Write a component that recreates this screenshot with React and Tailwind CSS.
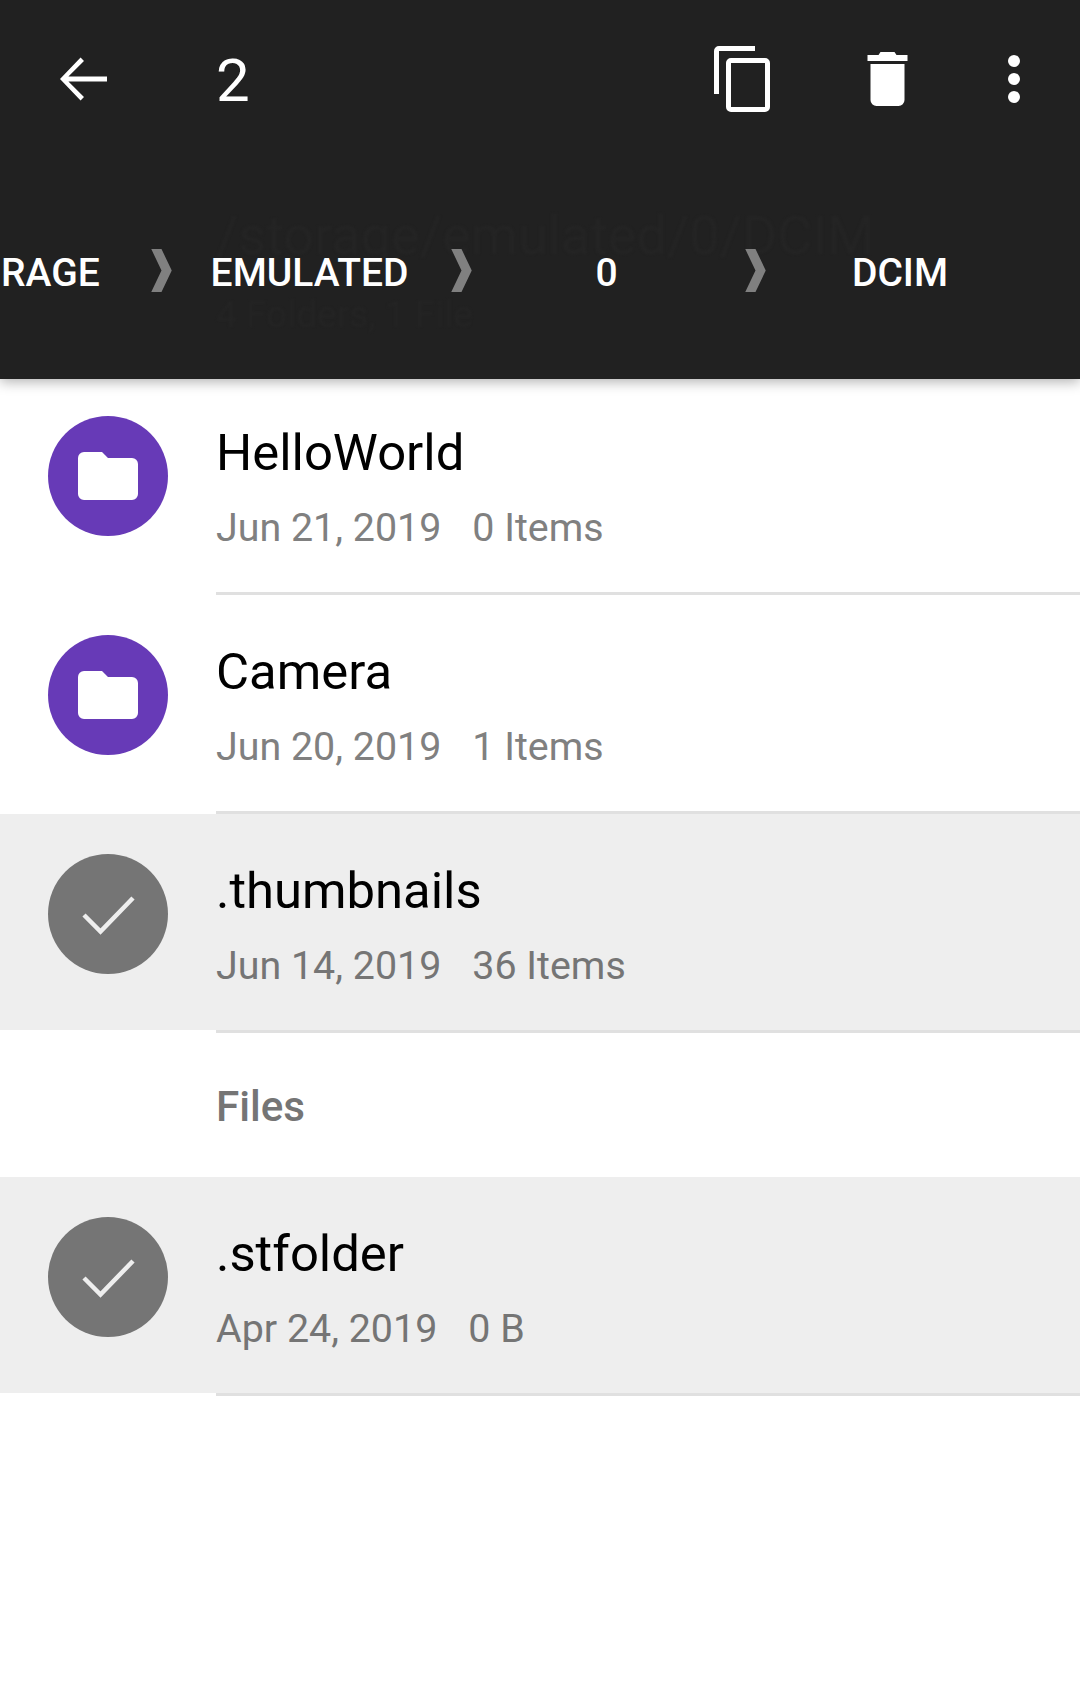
const FolderIcon = () => (
  <svg viewBox="0 0 60 48" className="w-[60px] h-[48px]" fill="white">
    <path d="M6 0h18l6 6h24a6 6 0 0 1 6 6v30a6 6 0 0 1-6 6H6a6 6 0 0 1-6-6V6a6 6 0 0 1 6-6z" />
  </svg>
);

const CheckIcon = () => (
  <svg viewBox="0 0 120 120" className="w-[120px] h-[120px]" fill="none" stroke="#eeeeee" strokeWidth="4.5">
    <path d="M36 61l16.500 16.500L85 44" />
  </svg>
);

const rows = [
  { name: "HelloWorld", date: "Jun 21, 2019", info: "0 Items" },
  { name: "Camera", date: "Jun 20, 2019", info: "1 Items" },
  { name: ".thumbnails", date: "Jun 14, 2019", info: "36 Items", selected: true },
];

const Row = ({ name, date, info, selected, first }) => (
  <div className={first ? "-mt-[3px]" : ""}>
    <div className={`h-[216px] flex pl-[48px] ${selected ? "bg-[#eeeeee]" : "bg-white"}`}>
      <div className={`w-[120px] h-[120px] mt-[40px] rounded-full flex items-center justify-center ${selected ? "bg-[#757575]" : "bg-[#673ab7]"}`}>
        {selected ? <CheckIcon /> : <FolderIcon />}
      </div>
      <div className="ml-[48px]">
        <div className="mt-[44px] text-[50.8px] leading-[66px] text-black">{name}</div>
        <div className={`mt-[15px] text-[39.4px] leading-[54px] flex gap-[31px] ${selected ? "text-[#757575]" : "text-[#808080]"}`}>
          <span>{date}</span>
          <span>{info}</span>
        </div>
      </div>
    </div>
    <div className="h-[3px] ml-[216px] bg-[#e0e0e0]" />
  </div>
);

const Chevron = () => (
  <svg viewBox="0 0 20 42" className="w-[21px] h-[43px] shrink-0" fill="#808080">
    <path d="M0 0h10l10 21-10 21H0l10-21z" />
  </svg>
);

export default function App() {
  return (
    <div className="w-[1080px] h-[1699px] bg-white overflow-hidden" style={{ fontFamily: "Roboto, sans-serif" }}>
      <header className="relative z-10 h-[379px] bg-[#212121] shadow-[0_3px_12px_rgba(0,0,0,0.3)]">
        {/* action bar */}
        <div className="flex items-center h-[158px] pl-[60px] pr-[60px]">
          <svg viewBox="0 0 48 48" className="w-[47px] h-[48px]" fill="white">
            <path d="M48 21.500H8.600L24.500 5.500 21 2 0 24l21 22 3.500-3.500-15.900-16H48z" />
          </svg>
          <span className="ml-[109px] mt-[4px] text-[60px] leading-[72px] text-white">2</span>
          <svg viewBox="0 0 56 66" className="ml-auto w-[56px] h-[66px]" fill="white">
            <path d="M41 0H5a5 5 0 0 0-5 5v43h5V5h36zM51 12H17a5 5 0 0 0-5 5v44a5 5 0 0 0 5 5h34a5 5 0 0 0 5-5V17a5 5 0 0 0-5-5zm0 49H17V17h34z" />
          </svg>
          <svg viewBox="0 0 40 54" className="ml-[97px] w-[41px] h-[54px]" fill="white">
            <path d="M3 48a6 6 0 0 0 6 6h22a6 6 0 0 0 6-6V12H3zM40 3H29l-2-3H13l-2 3H0v6h40z" />
          </svg>
          <svg viewBox="0 0 12 48" className="ml-[100px] w-[12px] h-[48px]" fill="white">
            <circle cx="6" cy="6" r="6" />
            <circle cx="6" cy="24" r="6" />
            <circle cx="6" cy="42" r="6" />
          </svg>
        </div>

        {/* path and count fading out behind the breadcrumbs */}
        <div className="absolute left-[216px] top-[208px] text-[54px] leading-[56px] text-[#242424] blur-[1px] whitespace-nowrap">/storage/emulated/0/DCIM</div>
        <div className="absolute left-[216px] top-[293px] text-[37px] leading-[44px] text-[#242424] blur-[1px] whitespace-nowrap">4 Folders, 1 File</div>

        {/* breadcrumbs */}
        <div className="relative mt-[91px] h-[43px] flex items-center text-[39px] font-medium text-white whitespace-nowrap">
          <span className="w-[151px] pl-[1px] pt-[5px]">RAGE</span>
          <Chevron />
          <span className="w-[279px] pr-[4px] pt-[5px] text-center">EMULATED</span>
          <Chevron />
          <span className="w-[269px] mr-[4px] pt-[5px] text-center">0</span>
          <Chevron />
          <span className="w-[268px] pt-[5px] text-center">DCIM</span>
        </div>
      </header>
      {rows.map((r, i) => (
        <Row key={r.name} {...r} first={i === 0} />
      ))}
      <div className="h-[144px] pl-[216px] pt-[51px] text-[42.2px] leading-[46px] font-medium text-[#757575]">Files</div>
      <Row name=".stfolder" date="Apr 24, 2019" info="0 B" selected />
    </div>
  );
}
